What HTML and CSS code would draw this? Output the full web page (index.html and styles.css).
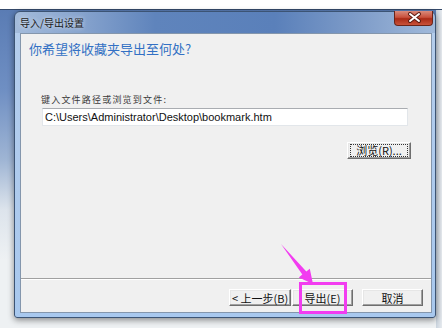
FILE: index.html
```html
<!DOCTYPE html>
<html lang="zh-CN">
<head>
  <meta charset="UTF-8" />
  <title>导入/导出设置</title>
  <link rel="stylesheet" href="styles.css">
</head>
<body>

<div class="top-strip"></div>

<div class="desk">
  <div class="window">
    <div class="titlebar">
      <span class="title">导入/导出设置</span>
      <button class="close-btn" title="关闭">
        <svg width="39" height="15" viewBox="0 0 39 15">
          <path d="M15 4 L24 11 M24 4 L15 11" stroke="#5a1a12" stroke-width="4" stroke-linecap="round"/>
          <path d="M15 4 L24 11 M24 4 L15 11" stroke="#ffffff" stroke-width="2" stroke-linecap="round"/>
        </svg>
      </button>
    </div>

    <div class="client">
      <div class="header">你希望将收藏夹导出至何处?</div>

      <div class="body">
        <label class="path-label" for="path">键入文件路径或浏览到文件:</label>
        <input class="path-input" id="path" type="text" value="C:\Users\Administrator\Desktop\bookmark.htm">
        <div class="browse-row">
          <button class="btn btn-browse"><span class="focus">浏览(R)...</span></button>
        </div>
      </div>

      <div class="footer">
        <button class="btn btn-back">&lt; 上一步(B)</button>
        <button class="btn btn-export">导出(E)</button>
        <button class="btn btn-cancel">取消</button>
      </div>
    </div>
  </div>
</div>

<div class="highlight"></div>
<svg class="arrow" width="442" height="328" viewBox="0 0 442 328">
  <polygon points="281,244 306.3,271.6 309.8,268.8 313,284 298.8,277.4 302.3,274.6" fill="#f23cf0"/>
</svg>

</body>
</html>
```

FILE: styles.css
```css
body {
  margin: 0;
  width: 442px;
  height: 328px;
  overflow: hidden;
  position: relative;
  font-family: "Noto Sans CJK SC", "Liberation Sans", sans-serif;
  background: #f3f4f5;
}
.top-strip {
  height: 9px;
  background: #ffffff;
  border-bottom: 1px solid #34496a;
}
.desk {
  height: 318px;
  padding: 1px 0 0 14px;
  box-sizing: border-box;
  background:
    linear-gradient(to right, transparent 436px, #c9d3de 436px, #e6eaee 442px),
    linear-gradient(to bottom, #5a7cb4 0, #6f8fc3 80px, #9fb5d4 150px, #dde4ec 200px, #eef1f3 250px);
}
.window {
  width: 422px;
  height: 307px;
  box-sizing: border-box;
  border: 1px solid #3c5474;
  border-radius: 6px 6px 3px 3px;
  background:
    linear-gradient(to bottom, transparent 0, transparent 21px, #b4cdec 21px, #a8c8ee 100%),
    linear-gradient(to right, #a3bbdb 0, #8aa6cf 60px, #5f84bc 140px, #5a80ba 260px, #7d9bc8 340px, #a0b9da 420px);
  box-shadow: 0 2px 6px rgba(0,0,0,0.45);
}
.titlebar {
  height: 21px;
  display: flex;
  justify-content: space-between;
  align-items: flex-start;
}
.title {
  font-size: 10px;
  line-height: 21px;
  padding-left: 5px;
  color: #1c1c1c;
  text-shadow: 0 0 4px rgba(255,255,255,0.8);
}
.close-btn {
  width: 39px;
  height: 15px;
  padding: 0;
  margin: -1px 2px 0 0;
  border: 1px solid #6b2418;
  border-top: none;
  border-radius: 0 0 4px 4px;
  background: linear-gradient(to bottom, #d98b7c 0, #c8503c 45%, #a92a16 55%, #c9523a 100%);
}
.close-btn svg {
  display: block;
  margin-top: -1px;
}
.client {
  height: 280px;
  margin: 0 3px 0 5px;
  box-sizing: border-box;
  border: 1px solid #8496ac;
  background: #f0f0f0;
  display: flex;
  flex-direction: column;
}
.header {
  padding: 7px 0 0 8px;
  font-size: 13px;
  line-height: 16px;
  color: #3370c4;
}
.body {
  margin-top: 37px;
  padding: 0 20px;
}
.path-label {
  display: block;
  font-size: 9px;
  line-height: 11px;
  letter-spacing: 1.2px;
  color: #3a3a3a;
}
.path-input {
  display: block;
  width: 366px;
  height: 18px;
  margin: 3px 0 0 1px;
  padding: 0 2px;
  box-sizing: border-box;
  border: 1px solid #e2e6ea;
  border-top-color: #a9acb1;
  background: #ffffff;
  font-family: "Liberation Sans", sans-serif;
  font-size: 11px;
  color: #111;
  outline: none;
}
.browse-row {
  display: flex;
  justify-content: flex-end;
  margin-top: 16px;
}
.btn {
  height: 17px;
  padding: 0;
  box-sizing: border-box;
  font-family: "Noto Sans CJK SC", "Liberation Sans", sans-serif;
  font-size: 11px;
  line-height: 14px;
  color: #111;
  background: #f0f0f0;
  border: 1px solid;
  border-color: #ffffff #6e6e6e #6e6e6e #ffffff;
  box-shadow: inset -1px -1px #a0a0a0, inset 1px 1px #e6e6e6;
}
.btn-browse {
  width: 64px;
  padding: 1px 2px;
}
.btn-browse .focus {
  display: block;
  height: 11px;
  line-height: 11px;
  border: 1px dotted #333;
}
.footer {
  margin-top: auto;
  height: 34px;
  box-sizing: border-box;
  border-top: 1px solid #a0a0a0;
  box-shadow: inset 0 1px #ffffff;
  padding: 10px 8px 0 0;
  display: flex;
  justify-content: flex-end;
  align-items: flex-start;
}
.btn-back {
  width: 62px;
  margin-right: 1px;
}
.btn-export {
  width: 61px;
  margin-right: 9px;
}
.btn-cancel {
  width: 61px;
}
.highlight {
  position: absolute;
  left: 299px;
  top: 282px;
  width: 48px;
  height: 32px;
  box-sizing: border-box;
  border: 3px solid #f23cf0;
}
.arrow {
  position: absolute;
  left: 0;
  top: 0;
}
```
